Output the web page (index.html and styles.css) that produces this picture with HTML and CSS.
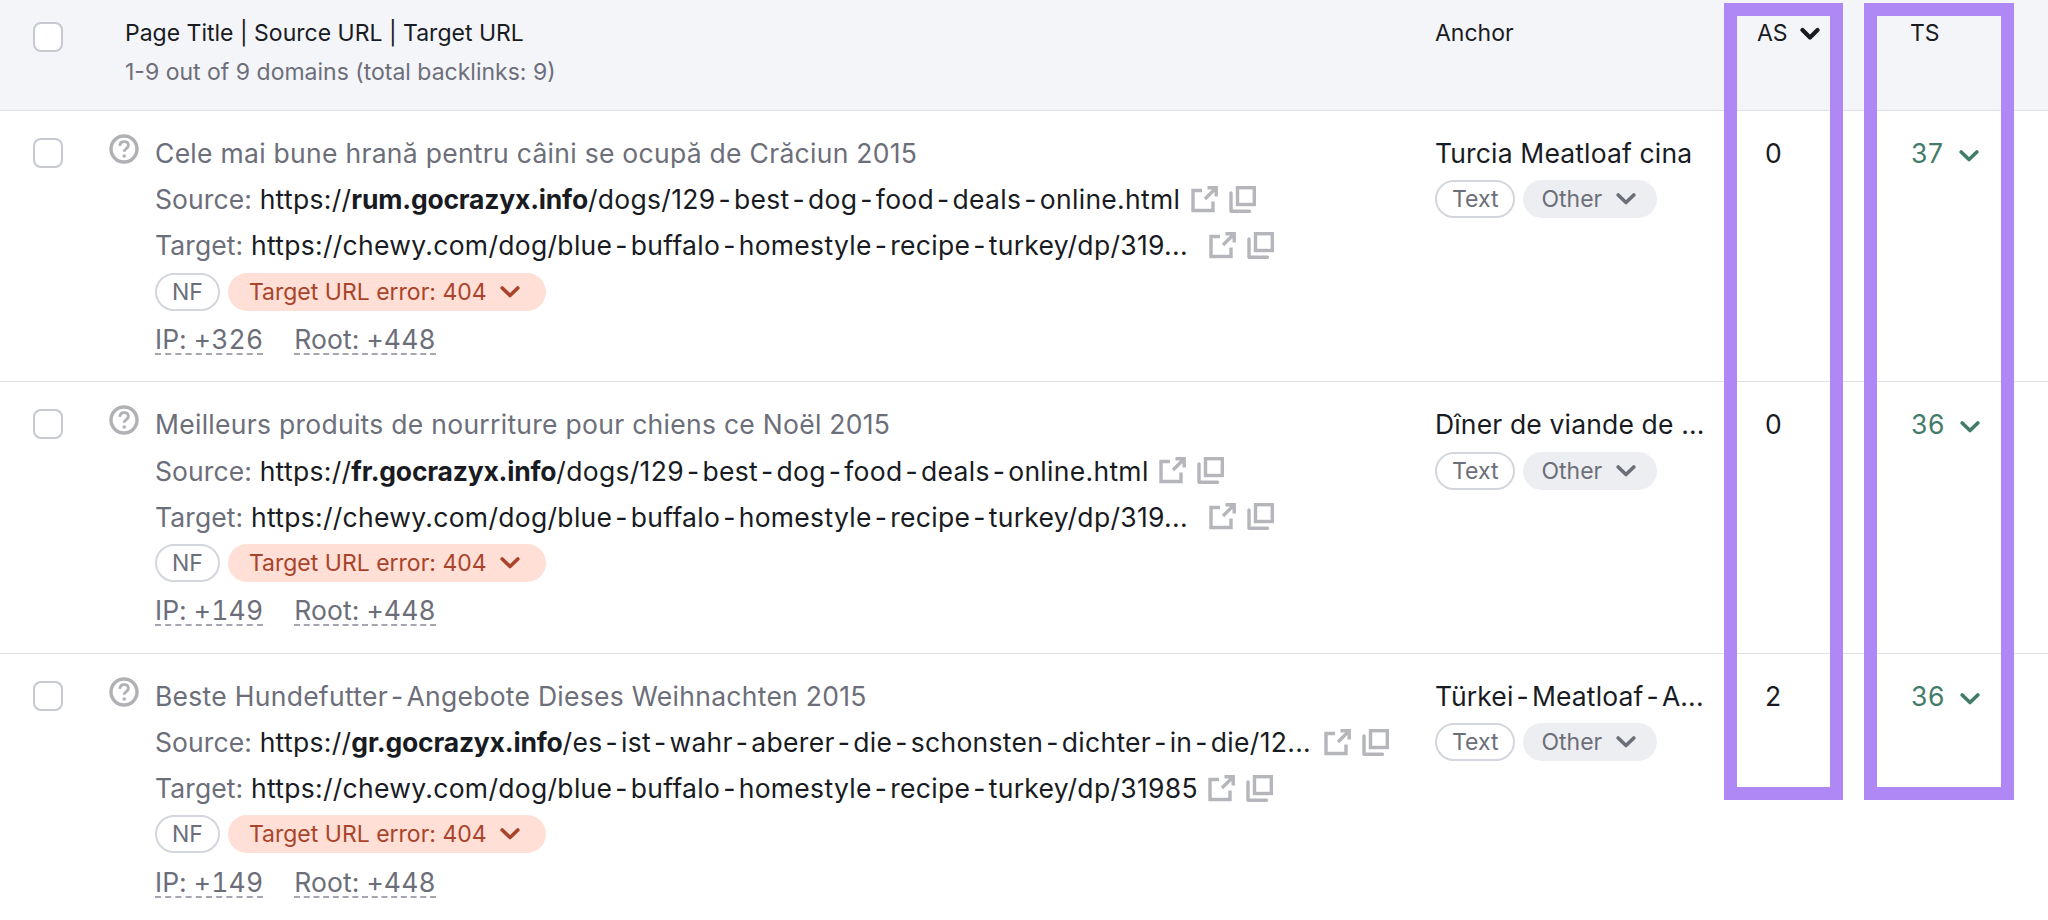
FILE: index.html
```html
<!DOCTYPE html>
<html lang="en">
<head>
<meta charset="utf-8">
<title>Backlinks</title>
<link rel="stylesheet" href="styles.css">
</head>
<body>
<svg class="defs" width="0" height="0" aria-hidden="true">
  <symbol id="ext" viewBox="0 0 27 27"><path d="M11 4.500H2v20h20v-9M14 13 25 2M16.500 1.800h8.700v8.700" fill="none" stroke="currentColor" stroke-width="3.400"/></symbol>
  <symbol id="copy" viewBox="0 0 27 27"><path d="M2 7v18.200h18.500" fill="none" stroke="currentColor" stroke-width="3.400" stroke-linejoin="round" stroke-linecap="round"/><rect x="8.500" y="1.700" width="16.800" height="16.800" fill="none" stroke="currentColor" stroke-width="3.400"/></symbol>
  <symbol id="chev" viewBox="0 0 20 14"><path d="M2.200 3 10 10.500 17.800 3" fill="none" stroke="currentColor" stroke-width="3.600" stroke-linecap="round" stroke-linejoin="round"/></symbol>
  <symbol id="chev-b" viewBox="0 0 20 14"><path d="M2.500 3 10 10.500 17.500 3" fill="none" stroke="currentColor" stroke-width="4.200" stroke-linecap="round" stroke-linejoin="round"/></symbol>
  <symbol id="help" viewBox="0 0 30 30"><circle cx="15" cy="15" r="13" fill="none" stroke="currentColor" stroke-width="3.400"/><path d="M10.800 11.800c.2-2.700 2-4.200 4.400-4.200 2.500 0 4.200 1.500 4.200 3.600 0 3.400-4.200 3.400-4.200 6.600" fill="none" stroke="currentColor" stroke-width="2.800"/><circle cx="15.200" cy="22" r="1.800" fill="currentColor"/></symbol>
</svg>

<main class="table">
  <div class="row head">
    <div class="check-col"><span class="box"></span></div>
    <div class="main-col head-main">
      <div class="head-title">Page Title | Source URL | Target URL</div>
      <div class="head-sub">1-9 out of 9 domains (total backlinks: 9)</div>
    </div>
    <div class="anchor-col head-title">Anchor</div>
    <div class="as-col head-title">AS <svg class="chev chev-bold"><use href="#chev-b"/></svg></div>
    <div class="ts-col head-title">TS</div>
  </div>

  <div class="row item">
    <div class="check-col"><span class="box"></span></div>
    <div class="icon-col"><svg class="help"><use href="#help"/></svg></div>
    <div class="body-col">
      <div class="line title">Cele mai bune hrană pentru câini se ocupă de Crăciun 2015</div>
      <div class="line"><span class="label">Source:</span>&nbsp;<span class="url">https://<b>rum.gocrazyx.info</b>/dogs/129<i class="hy">-</i>best<i class="hy">-</i>dog<i class="hy">-</i>food<i class="hy">-</i>deals<i class="hy">-</i>online.html</span><span class="tools"><svg class="tool"><use href="#ext"/></svg><svg class="tool"><use href="#copy"/></svg></span></div>
      <div class="line"><span class="label">Target:</span>&nbsp;<span class="url">https://chewy.com/dog/blue<i class="hy">-</i>buffalo<i class="hy">-</i>homestyle<i class="hy">-</i>recipe<i class="hy">-</i>turkey/dp/319...</span><span class="tools wide"><svg class="tool"><use href="#ext"/></svg><svg class="tool"><use href="#copy"/></svg></span></div>
      <div class="line chips"><span class="chip">NF</span><span class="chip error">Target URL error: 404 <svg class="chev"><use href="#chev"/></svg></span></div>
      <div class="line counts"><span class="count">IP: +326</span><span class="count">Root: +448</span></div>
    </div>
    <div class="anchor-col">
      <div class="line anchor">Turcia Meatloaf cina</div>
      <div class="line chips"><span class="chip">Text</span><span class="chip other">Other <svg class="chev"><use href="#chev"/></svg></span></div>
    </div>
    <div class="as-col value">0</div>
    <div class="ts-col value ts">37 <svg class="chev"><use href="#chev"/></svg></div>
  </div>

  <div class="row item">
    <div class="check-col"><span class="box"></span></div>
    <div class="icon-col"><svg class="help"><use href="#help"/></svg></div>
    <div class="body-col">
      <div class="line title">Meilleurs produits de nourriture pour chiens ce Noël 2015</div>
      <div class="line"><span class="label">Source:</span>&nbsp;<span class="url">https://<b>fr.gocrazyx.info</b>/dogs/129<i class="hy">-</i>best<i class="hy">-</i>dog<i class="hy">-</i>food<i class="hy">-</i>deals<i class="hy">-</i>online.html</span><span class="tools"><svg class="tool"><use href="#ext"/></svg><svg class="tool"><use href="#copy"/></svg></span></div>
      <div class="line"><span class="label">Target:</span>&nbsp;<span class="url">https://chewy.com/dog/blue<i class="hy">-</i>buffalo<i class="hy">-</i>homestyle<i class="hy">-</i>recipe<i class="hy">-</i>turkey/dp/319...</span><span class="tools wide"><svg class="tool"><use href="#ext"/></svg><svg class="tool"><use href="#copy"/></svg></span></div>
      <div class="line chips"><span class="chip">NF</span><span class="chip error">Target URL error: 404 <svg class="chev"><use href="#chev"/></svg></span></div>
      <div class="line counts"><span class="count">IP: +149</span><span class="count">Root: +448</span></div>
    </div>
    <div class="anchor-col">
      <div class="line anchor">Dîner de viande de ...</div>
      <div class="line chips"><span class="chip">Text</span><span class="chip other">Other <svg class="chev"><use href="#chev"/></svg></span></div>
    </div>
    <div class="as-col value">0</div>
    <div class="ts-col value ts">36 <svg class="chev"><use href="#chev"/></svg></div>
  </div>

  <div class="row item">
    <div class="check-col"><span class="box"></span></div>
    <div class="icon-col"><svg class="help"><use href="#help"/></svg></div>
    <div class="body-col">
      <div class="line title">Beste Hundefutter<i class="hy">-</i>Angebote Dieses Weihnachten 2015</div>
      <div class="line"><span class="label">Source:</span>&nbsp;<span class="url">https://<b>gr.gocrazyx.info</b>/es<i class="hy">-</i>ist<i class="hy">-</i>wahr<i class="hy">-</i>aberer<i class="hy">-</i>die<i class="hy">-</i>schonsten<i class="hy">-</i>dichter<i class="hy">-</i>in<i class="hy">-</i>die/12...</span><span class="tools mid"><svg class="tool"><use href="#ext"/></svg><svg class="tool"><use href="#copy"/></svg></span></div>
      <div class="line"><span class="label">Target:</span>&nbsp;<span class="url">https://chewy.com/dog/blue<i class="hy">-</i>buffalo<i class="hy">-</i>homestyle<i class="hy">-</i>recipe<i class="hy">-</i>turkey/dp/31985</span><span class="tools"><svg class="tool"><use href="#ext"/></svg><svg class="tool"><use href="#copy"/></svg></span></div>
      <div class="line chips"><span class="chip">NF</span><span class="chip error">Target URL error: 404 <svg class="chev"><use href="#chev"/></svg></span></div>
      <div class="line counts"><span class="count">IP: +149</span><span class="count">Root: +448</span></div>
    </div>
    <div class="anchor-col">
      <div class="line anchor">Türkei<i class="hy">-</i>Meatloaf<i class="hy">-</i>A...</div>
      <div class="line chips"><span class="chip">Text</span><span class="chip other">Other <svg class="chev"><use href="#chev"/></svg></span></div>
    </div>
    <div class="as-col value">2</div>
    <div class="ts-col value ts">36 <svg class="chev"><use href="#chev"/></svg></div>
  </div>

  <div class="mark mark-as"></div>
  <div class="mark mark-ts"></div>
</main>
</body>
</html>
```

FILE: styles.css
```css
* { box-sizing: border-box; }
html, body { margin: 0; height: 920px; overflow: hidden; background: #fff; }
body { font-family: Inter, "Liberation Sans", sans-serif; font-size: 26.500px; letter-spacing: .15px; color: #191b23; }
.defs { position: absolute; }
.table { position: relative; width: 2048px; height: 920px; overflow: hidden; }

.row { display: grid; grid-template-columns: 109px 46px 1280px 322px 154px 1fr; }
.head { height: 111px; background: #f4f5f9; border-bottom: 1.500px solid #e0e1e9; }
.item { height: 271.400px; border-bottom: 1.500px solid #e0e1e9; padding-top: 19px; }
.item:last-of-type { border-bottom: 0; }

.check-col { padding-left: 33px; }
.box { display: block; width: 30px; height: 30px; background: #fff; border: 2px solid #c6c9d1; border-radius: 8px; }
.head .check-col { padding-top: 22px; }
.item .check-col { padding-top: 8px; }
.icon-col { color: #b0b1b5; margin-top: 4px; }
.help { display: block; width: 30px; height: 30px; }

.head-main { grid-column: 2 / 4; padding-left: 16px; }
.head-title { font-size: 23px; letter-spacing: 0; line-height: 30px; padding-top: 18px; color: #191b23; }
.head-sub { font-size: 23px; letter-spacing: 0; line-height: 30px; margin-top: 9px; color: #6c6e79; }
.head .ts-col { margin-left: -1px; }

.line { display: flex; align-items: center; height: 46.200px; white-space: pre; }
.title { color: #6c6e79; letter-spacing: .28px; }
.label { color: #6c6e79; letter-spacing: .1px; }
.url { letter-spacing: .3px; }
.url b { font-weight: 700; letter-spacing: -.2px; }
.hy { font-style: normal; margin: 0 3px; }
.tools { display: inline-flex; gap: 11px; margin-left: 10.500px; color: #b5b6bb; }
.tools.mid { margin-left: 13px; }
.tools.wide { margin-left: 21px; }
.tool { display: block; width: 27px; height: 27px; }

.chips { gap: 8px; }
.chip { display: inline-flex; align-items: center; height: 38px; padding: 0 15px; border: 2px solid #d4d6dd; border-radius: 19px; font-size: 23px; letter-spacing: 0; color: #6c6e79; background: #fff; white-space: pre; }
.chip.error { border: 0; background: #ffdfd6; color: #a9442a; padding: 0 26px 0 21px; }
.chip.other { border: 0; background: #edeef2; padding: 0 21px 0 18px; }
.chev { width: 20px; height: 14px; margin-left: 7px; }
.chev-bold { color: #191b23; margin-left: 6px; }

.counts { gap: 31px; color: #6c6e79; margin-top: 2px; font-variant-numeric: tabular-nums; }
.count { border-bottom: 2px dashed #a4a6b0; line-height: 28px; }

.value { padding-top: 0; line-height: 46.200px; }
.ts { color: #437b6a; letter-spacing: .6px; }
.as-col.value { padding-left: 8px; }

.mark { position: absolute; top: 3px; height: 797px; border: 13px solid #b088f5; }
.mark-as { left: 1724px; width: 119px; }
.mark-ts { left: 1864px; width: 150px; }
```
